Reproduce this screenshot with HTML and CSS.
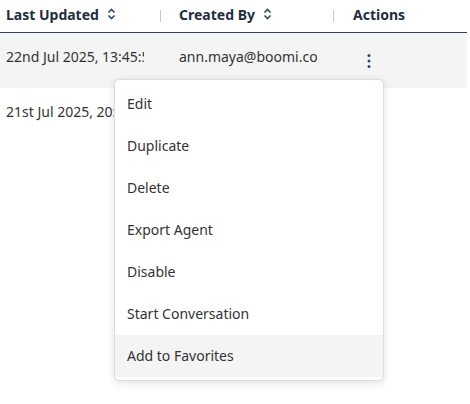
FILE: index.html
```html
<!DOCTYPE html>
<html>
<head>
<meta charset="utf-8">
<link rel="stylesheet" href="styles.css">
</head>
<body>
<div class="table">
  <div class="row head">
    <div class="cell"><span class="label">Last Updated</span>
      <svg class="sort" width="9" height="12" viewBox="0 0 9 12"><path d="M1.5 4.5 L4.5 1.5 L7.5 4.5 M1.5 7.5 L4.5 10.5 L7.5 7.5" fill="none" stroke="#2f4a6d" stroke-width="1.6"/></svg>
      <span class="sep"></span></div>
    <div class="cell"><span class="label">Created By</span>
      <svg class="sort" width="9" height="12" viewBox="0 0 9 12"><path d="M1.5 4.5 L4.5 1.5 L7.5 4.5 M1.5 7.5 L4.5 10.5 L7.5 7.5" fill="none" stroke="#2f4a6d" stroke-width="1.6"/></svg>
      <span class="sep"></span></div>
    <div class="cell actions-head"><span class="label">Actions</span></div>
  </div>
  <div class="row data hover">
    <div class="cell text"><span class="clip">22nd Jul 2025, 13:45:52</span></div>
    <div class="cell text"><span class="clip">ann.maya@boomi.com</span></div>
    <div class="cell"><button class="kebab"><svg width="4" height="16" viewBox="0 0 4 16"><circle cx="2" cy="2.5" r="1.5" fill="#2f4a6d"/><circle cx="2" cy="8" r="1.5" fill="#2f4a6d"/><circle cx="2" cy="13.5" r="1.5" fill="#2f4a6d"/></svg></button></div>
  </div>
  <div class="row data">
    <div class="cell text"><span class="clip">21st Jul 2025, 20:11:03</span></div>
    <div class="cell text"><span class="clip">ann.maya@boomi.com</span></div>
    <div class="cell"></div>
  </div>
</div>
<div class="menu">
  <div class="item">Edit</div>
  <div class="item">Duplicate</div>
  <div class="item">Delete</div>
  <div class="item">Export Agent</div>
  <div class="item">Disable</div>
  <div class="item">Start Conversation</div>
  <div class="item active">Add to Favorites</div>
</div>
</body>
</html>
```
FILE: styles.css
```css
html, body { margin: 0; padding: 0; background: #fff; }
body { font-family: "Noto Sans", "Open Sans", sans-serif; font-size: 14px; color: #333; width: 470px; height: 404px; position: relative; overflow: hidden; }
.table { width: 467px; }
.row { display: grid; grid-template-columns: 173px 173px 1fr; }
.head { height: 32px; border-bottom: 1px solid #2d3f5e; }
.head .cell { display: flex; align-items: center; padding-left: 6px; padding-bottom: 4px; box-sizing: border-box; position: relative; height: 32px; }
.head .actions-head { padding-left: 7px; }
.label { font-weight: 700; color: #1f2d3d; }
.sort { margin-left: 8px; }
.sep { position: absolute; left: 160px; top: 10px; width: 1px; height: 12px; background: #c8c8c8; }
.data { height: 55px; }
.data .cell { padding-left: 6px; display: flex; align-items: center; box-sizing: border-box; }
.data .cell.text { padding-bottom: 8px; }
.hover { background: #f4f4f4; }
.clip { display: block; width: 138px; overflow: hidden; white-space: nowrap; color: #333; }
.kebab { border: 0; background: transparent; width: 32px; height: 32px; padding: 0; display: flex; align-items: center; justify-content: center; margin-left: 1px; }
.menu { position: absolute; left: 114px; top: 79px; width: 270px; box-sizing: border-box; background: #fff; border: 1px solid #ddd; border-radius: 5px; box-shadow: 0 2px 8px rgba(0,0,0,0.12); padding: 3px 0; }
.item { height: 42px; box-sizing: border-box; display: flex; align-items: center; padding-left: 12px; padding-bottom: 2px; color: #333; }
.item.active { background: #f4f4f4; }
```
